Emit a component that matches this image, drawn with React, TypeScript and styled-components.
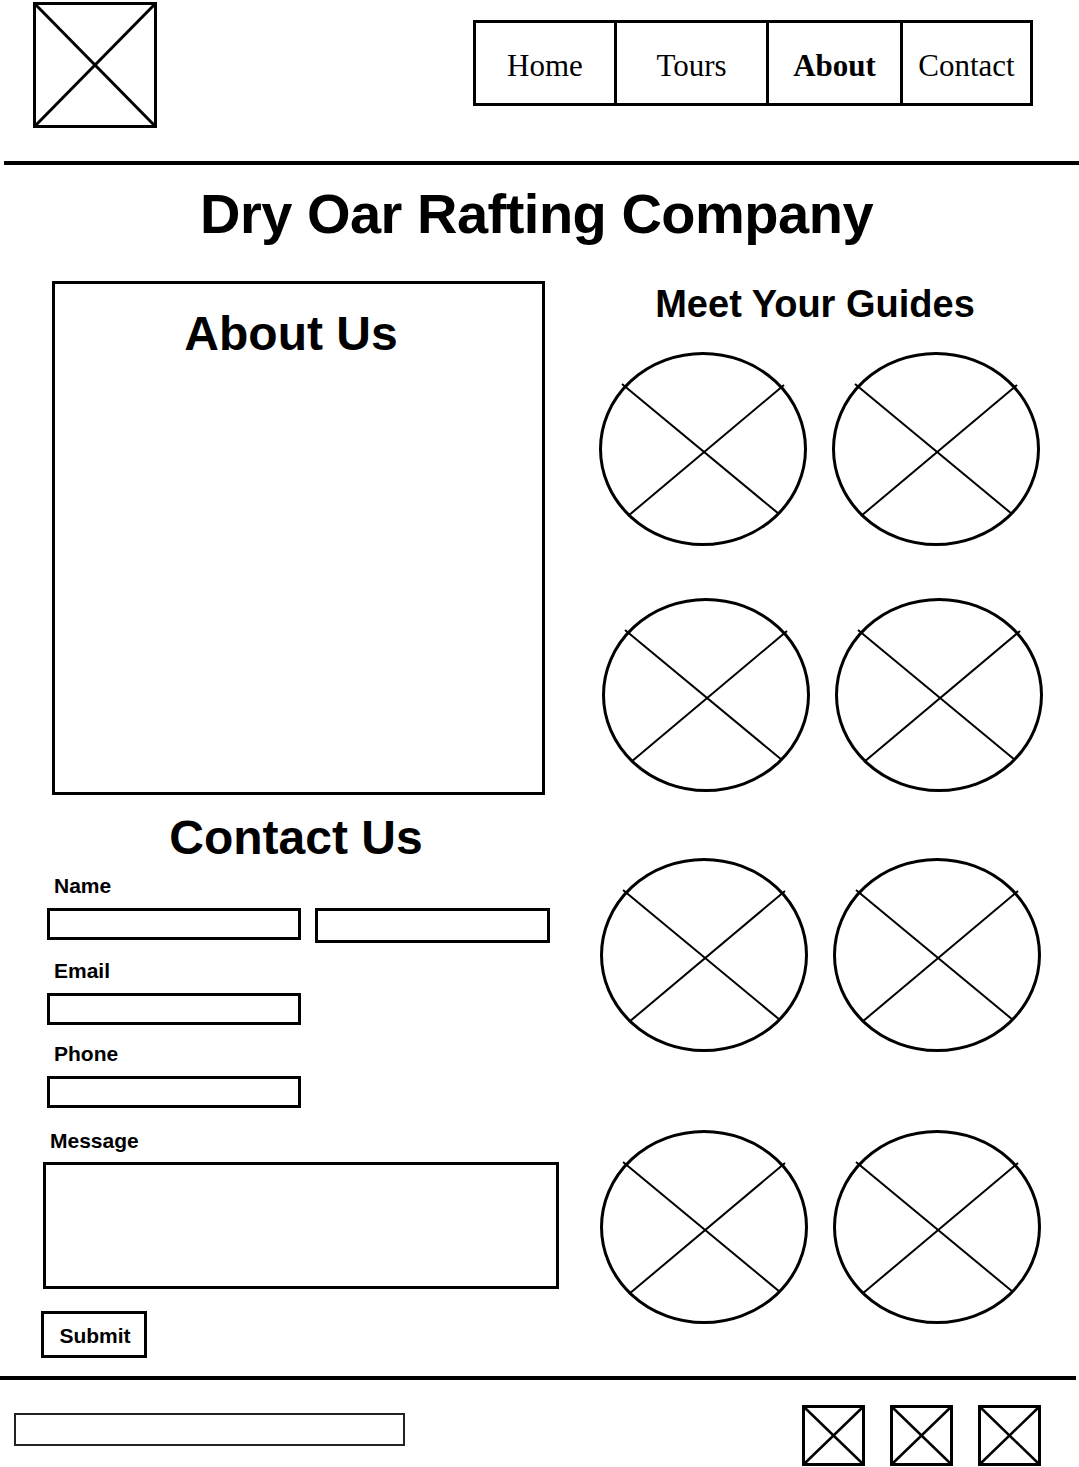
import React from "react";
import styled, { createGlobalStyle } from "styled-components";

const GlobalStyle = createGlobalStyle`
  html, body { margin: 0; padding: 0; background: #fff; }
  body { font-family: "Liberation Sans", Arial, sans-serif; color: #000; }
  * { box-sizing: border-box; }
`;

const Page = styled.div`
  width: 1079px;
  display: flex;
  flex-direction: column;
`;

const Header = styled.header`
  height: 161px;
  display: flex;
  justify-content: space-between;
  align-items: flex-start;
  padding: 2px 46px 0 33px;
`;

const Nav = styled.nav`
  margin-top: 18px;
  display: flex;
  height: 86px;
  border: 3px solid #000;
`;

const NavItem = styled.a<{ $w: number; $active?: boolean; $first?: boolean }>`
  width: ${(p) => p.$w}px;
  display: flex;
  align-items: center;
  justify-content: center;
  padding-top: 5px;
  border-left: ${(p) => (p.$first ? "none" : "3px solid #000")};
  font-family: "Liberation Serif", "Times New Roman", serif;
  font-size: 31px;
  font-weight: ${(p) => (p.$active ? 700 : 400)};
  color: #000;
  text-decoration: none;
`;

const Rule = styled.hr<{ $ml?: number; $mr?: number; $mt?: number }>`
  margin: ${(p) => p.$mt ?? 0}px ${(p) => p.$mr ?? 0}px 0 ${(p) => p.$ml ?? 0}px;
  border: none;
  height: 4px;
  background: #000;
`;

const Title = styled.h1`
  margin: 17px 0 0;
  text-align: center;
  font-size: 56px;
  line-height: 64px;
  letter-spacing: -0.5px;
  font-weight: 700;
  padding-right: 6px;
`;

const Main = styled.main`
  margin-top: 35px;
  display: flex;
  align-items: flex-start;
  padding-left: 41px;
  gap: 37px;
`;

const LeftColumn = styled.section`
  width: 520px;
  display: flex;
  flex-direction: column;
  align-items: flex-start;
`;

const AboutBox = styled.div`
  margin-left: 11px;
  width: 493px;
  height: 514px;
  border: 3px solid #000;
  padding: 23px 15px 0 0;
`;

const SectionHeading = styled.h2<{ $offset?: number }>`
  margin: 0;
  width: 100%;
  text-align: center;
  font-size: 48px;
  line-height: 54px;
  font-weight: 700;
  padding-right: ${(p) => p.$offset ?? 0}px;
`;

const ContactHeading = styled(SectionHeading)`
  margin-top: 16px;
`;

const Label = styled.label<{ $mt: number; $ml: number }>`
  display: block;
  margin: ${(p) => p.$mt}px 0 0 ${(p) => p.$ml}px;
  font-size: 21px;
  line-height: 24px;
  font-weight: 700;
`;

const FieldRow = styled.div`
  margin: 10px 0 0 6px;
  display: flex;
  align-items: flex-start;
  gap: 14px;
`;

const TextInput = styled.input<{ $w: number; $h: number }>`
  display: block;
  width: ${(p) => p.$w}px;
  height: ${(p) => p.$h}px;
  border: 3px solid #000;
  border-radius: 0;
  padding: 0 6px;
  background: #fff;
  outline: none;
`;

const Single = styled.div`
  margin: 10px 0 0 6px;
`;

const MessageArea = styled.textarea`
  display: block;
  margin: 9px 0 0 2px;
  width: 516px;
  height: 127px;
  border: 3px solid #000;
  border-radius: 0;
  resize: none;
  background: #fff;
  outline: none;
`;

const SubmitButton = styled.button`
  margin-top: 22px;
  width: 106px;
  height: 47px;
  border: 3px solid #000;
  border-radius: 0;
  background: #fff;
  font-family: "Liberation Sans", Arial, sans-serif;
  font-size: 21px;
  font-weight: 700;
  color: #000;
  padding: 2px 0 0 2px;
  cursor: pointer;
`;

const RightColumn = styled.section`
  width: 446px;
  display: flex;
  flex-direction: column;
`;

const GuidesHeading = styled.h2`
  margin: 0;
  text-align: center;
  font-size: 38px;
  line-height: 46px;
  font-weight: 700;
  padding-right: 12px;
`;

const GuideRow = styled.div<{ $mt: number; $ml: number }>`
  margin: ${(p) => p.$mt}px 0 0 ${(p) => p.$ml}px;
  display: flex;
  gap: 23px;
`;

const Footer = styled.footer`
  display: flex;
  justify-content: space-between;
  align-items: flex-start;
  padding: 25px 38px 0 14px;
`;

const FooterInput = styled.input`
  margin-top: 8px;
  width: 391px;
  height: 33px;
  border: 2px solid #222;
  border-radius: 0;
  background: #fff;
  outline: none;
`;

const Socials = styled.div`
  display: flex;
  gap: 25px;
`;

const LogoMark = () => (
  <svg width="124" height="126" viewBox="0 0 124 126" aria-label="logo">
    <rect x="1.5" y="1.5" width="121" height="123" fill="none" stroke="#000" strokeWidth="3" />
    <line x1="1.5" y1="1.5" x2="122.5" y2="124.5" stroke="#000" strokeWidth="3" />
    <line x1="122.5" y1="1.5" x2="1.5" y2="124.5" stroke="#000" strokeWidth="3" />
  </svg>
);

const GuidePhoto = () => (
  <svg width="210" height="196" viewBox="0 0 210 196">
    <ellipse cx="105" cy="98" rx="102.5" ry="95.5" fill="none" stroke="#000" strokeWidth="3" />
    <line x1="24" y1="33" x2="181" y2="163" stroke="#000" strokeWidth="2" />
    <line x1="186" y1="34" x2="30" y2="165" stroke="#000" strokeWidth="2" />
  </svg>
);

const SocialIcon = () => (
  <svg width="63" height="61" viewBox="0 0 63 61">
    <rect x="1.5" y="1.5" width="60" height="58" fill="none" stroke="#000" strokeWidth="3" />
    <line x1="1.5" y1="1.5" x2="61.5" y2="59.5" stroke="#000" strokeWidth="2.5" />
    <line x1="61.5" y1="1.5" x2="1.5" y2="59.5" stroke="#000" strokeWidth="2.5" />
  </svg>
);

const navItems = [
  { label: "Home", w: 138 },
  { label: "Tours", w: 152 },
  { label: "About", w: 134, active: true },
  { label: "Contact", w: 130 },
];

const guideRows = [
  { mt: 24, ml: 0 },
  { mt: 50, ml: 3 },
  { mt: 64, ml: 1 },
  { mt: 76, ml: 1 },
];

export default function App() {
  return (
    <Page>
      <GlobalStyle />
      <Header>
        <LogoMark />
        <Nav>
          {navItems.map((n, i) => (
            <NavItem key={n.label} href="#" $w={n.w} $active={n.active} $first={i === 0}>
              {n.label}
            </NavItem>
          ))}
        </Nav>
      </Header>
      <Rule $ml={4} />
      <Title>Dry Oar Rafting Company</Title>
      <Main>
        <LeftColumn>
          <AboutBox>
            <SectionHeading>About Us</SectionHeading>
          </AboutBox>
          <ContactHeading $offset={10}>Contact Us</ContactHeading>
          <Label $mt={9} $ml={13}>Name</Label>
          <FieldRow>
            <TextInput $w={254} $h={32} />
            <TextInput $w={235} $h={35} />
          </FieldRow>
          <Label $mt={16} $ml={13}>Email</Label>
          <Single>
            <TextInput $w={254} $h={32} />
          </Single>
          <Label $mt={17} $ml={13}>Phone</Label>
          <Single>
            <TextInput $w={254} $h={32} />
          </Single>
          <Label $mt={21} $ml={9}>Message</Label>
          <MessageArea />
          <SubmitButton>Submit</SubmitButton>
        </LeftColumn>
        <RightColumn>
          <GuidesHeading>Meet Your Guides</GuidesHeading>
          {guideRows.map((r, i) => (
            <GuideRow key={i} $mt={r.mt} $ml={r.ml}>
              <GuidePhoto />
              <GuidePhoto />
            </GuideRow>
          ))}
        </RightColumn>
      </Main>
      <Rule $mt={18} $mr={3} />
      <Footer>
        <FooterInput />
        <Socials>
          <SocialIcon />
          <SocialIcon />
          <SocialIcon />
        </Socials>
      </Footer>
    </Page>
  );
}
